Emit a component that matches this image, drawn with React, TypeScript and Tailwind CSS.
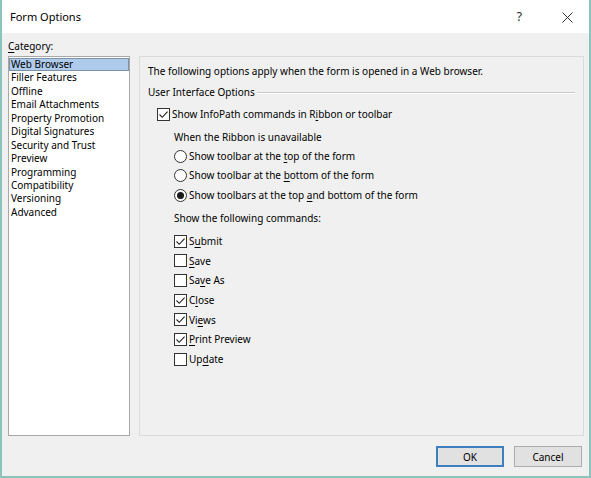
import React from 'react';

const FONT = { fontFamily: '"Noto Sans", "Open Sans", sans-serif' };

// Renders a label with one underlined access key character
const Key: React.FC<{ text: string; at: number }> = ({ text, at }) => (
  <span>
    {text.slice(0, at)}
    <span className="underline underline-offset-2">{text[at]}</span>
    {text.slice(at + 1)}
  </span>
);

const Checkbox: React.FC<{ checked?: boolean }> = ({ checked }) => (
  <span className="flex h-[13px] w-[13px] shrink-0 items-center justify-center border border-[#333] bg-white">
    {checked && (
      <svg width="11" height="11" viewBox="0 0 11 11">
        <polyline points="1.5,5.5 4.2,8.3 9.6,2.6" fill="none" stroke="#222" strokeWidth="1.1" />
      </svg>
    )}
  </span>
);

const Radio: React.FC<{ checked?: boolean }> = ({ checked }) => (
  <span className="flex h-[13px] w-[13px] shrink-0 items-center justify-center rounded-full border border-[#333] bg-white">
    {checked && <span className="h-[7px] w-[7px] rounded-full bg-[#1a1a1a]" />}
  </span>
);

const categories = [
  'Web Browser',
  'Filler Features',
  'Offline',
  'Email Attachments',
  'Property Promotion',
  'Digital Signatures',
  'Security and Trust',
  'Preview',
  'Programming',
  'Compatibility',
  'Versioning',
  'Advanced',
];

const commands: { label: string; key: number; checked: boolean }[] = [
  { label: 'Submit', key: 1, checked: true },
  { label: 'Save', key: 0, checked: false },
  { label: 'Save As', key: 2, checked: false },
  { label: 'Close', key: 1, checked: true },
  { label: 'Views', key: 2, checked: true },
  { label: 'Print Preview', key: 0, checked: true },
  { label: 'Update', key: 2, checked: false },
];

export default function App() {
  return (
    <div
      style={FONT}
      className="flex h-[478px] w-[591px] flex-col border-x-2 border-b-2 border-[#8cc3bc] bg-[#f0f0f0] text-[10px] leading-[14px] text-black"
    >
      {/* Title bar */}
      <div className="flex h-[33px] shrink-0 items-center bg-white pl-[8px] pt-[1px]">
        <span className="text-[11px]">Form Options</span>
        <span className="ml-auto mr-[40px] text-[12px] text-[#222]">?</span>
        <svg width="11" height="11" viewBox="0 0 11 11" className="mr-[16px]">
          <path d="M0.5 0.5 L10.5 10.5 M10.5 0.5 L0.5 10.5" stroke="#333" strokeWidth="1" />
        </svg>
      </div>

      <div className="flex flex-1 flex-col pl-[6px] pr-[5px]">
        <div className="mt-[6px] h-[14px]">
          <Key text="Category:" at={0} />
        </div>

        <div className="mt-[3px] flex gap-[9px]">
          {/* Category list */}
          <div className="h-[380px] w-[122px] border border-[#a8a8a8] bg-white pt-[1px]">
            {categories.map((c, i) => (
              <div
                key={c}
                className={
                  i === 0
                    ? 'h-[13.45px] border border-[#7f93a8] bg-[#aecbec] pl-[1px] leading-[11.45px]'
                    : 'h-[13.45px] pl-[2px] leading-[13.45px]'
                }
              >
                {c}
              </div>
            ))}
          </div>

          {/* Options panel */}
          <div className="flex h-[380px] flex-1 flex-col border border-[#dadada] pl-[8px] pr-[8px]">
            <div className="mt-[7px]">The following options apply when the form is opened in a Web browser.</div>

            <div className="mt-[7px] flex items-center gap-[2px]">
              <span>User Interface Options</span>
              <span className="mt-[1px] flex-1 border-t border-b border-t-[#c8c8c8] border-b-white" />
            </div>

            <div className="ml-[9px] mt-[8px] flex h-[14px] items-center gap-[2px]">
              <Checkbox checked />
              <span>
                Show InfoPath commands in R<span className="underline underline-offset-2">i</span>bbon or toolbar
              </span>
            </div>

            <div className="ml-[26px] flex flex-col">
              <div className="mt-[9px]">When the Ribbon is unavailable</div>
              <div className="mt-[5px] flex h-[14px] items-center gap-[2px]">
                <Radio />
                <span>
                  Show toolbar at the <Key text="top" at={0} /> of the form
                </span>
              </div>
              <div className="mt-[5px] flex h-[14px] items-center gap-[2px]">
                <Radio />
                <span>
                  Show toolbar at the <Key text="bottom" at={0} /> of the form
                </span>
              </div>
              <div className="mt-[6px] flex h-[14px] items-center gap-[2px]">
                <Radio checked />
                <span>
                  Show toolbars at the top <Key text="and" at={0} /> bottom of the form
                </span>
              </div>

              <div className="mt-[9px]">Show the following commands:</div>
              <div className="mt-[9px] flex flex-col gap-[5.7px]">
                {commands.map((c) => (
                  <div key={c.label} className="flex h-[14px] items-center gap-[2px]">
                    <Checkbox checked={c.checked} />
                    <Key text={c.label} at={c.key} />
                  </div>
                ))}
              </div>
            </div>
          </div>
        </div>

        {/* Buttons */}
        <div className="mt-[10px] flex justify-end gap-[10px] pr-[2px]">
          <button className="h-[21px] w-[68px] border-2 border-[#3f7fbf] bg-[#e1e1e1] text-[10px]">OK</button>
          <button className="h-[21px] w-[68px] border border-[#adadad] bg-[#e1e1e1] text-[10px]">Cancel</button>
        </div>
      </div>
    </div>
  );
}
